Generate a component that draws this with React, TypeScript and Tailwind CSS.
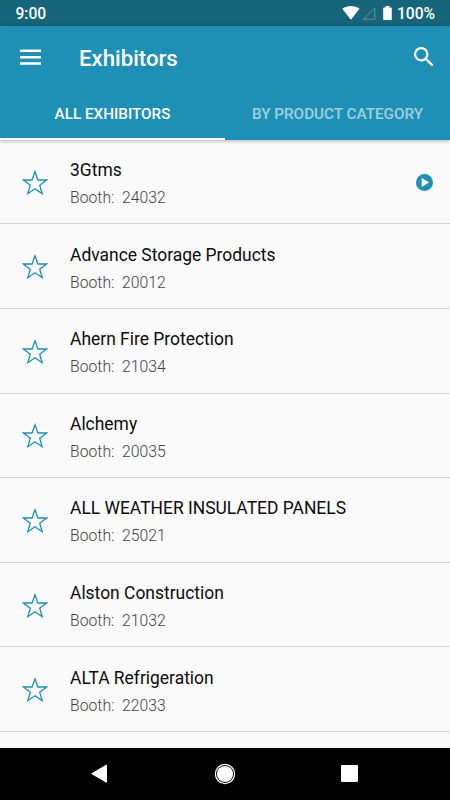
import React from 'react'

interface Exhibitor {
    name: string;
    booth: string;
    hasVideo?: boolean;
}

const exhibitors: Exhibitor[] = [
    { name: '3Gtms', booth: '24032', hasVideo: true },
    { name: 'Advance Storage Products', booth: '20012' },
    { name: 'Ahern Fire Protection', booth: '21034' },
    { name: 'Alchemy', booth: '20035' },
    { name: 'ALL WEATHER INSULATED PANELS', booth: '25021' },
    { name: 'Alston Construction', booth: '21032' },
    { name: 'ALTA Refrigeration', booth: '22033' },
]

function StatusBar() {
    return (
        <div className="flex h-[26px] shrink-0 items-center bg-[#17657b] pl-[15.5px] pr-[15px] text-[15.6px] font-medium leading-none text-white">
            <span className="mt-[4px]">9:00</span>
            <svg className="ml-auto" width="18" height="26" viewBox="0 0 18 26" fill="#fff">
                <path d="M.3 8.7C5.3 5.1 12.5 5.1 17.5 8.7L8.9 19.8z" />
            </svg>
            <svg className="ml-[2px]" width="14" height="26" viewBox="0 0 14 26" fill="none" stroke="#5f96a5">
                <path d="M1.5 19.2L12.8 8V19.2z" />
            </svg>
            <svg className="ml-[7px]" width="9" height="26" viewBox="0 0 9 26" fill="#fff">
                <path d="M2.6 6h3.8v1.5H8q.8 0 .8.8v10.9q0 .8-.8.8H1q-.8 0-.8-.8V8.3q0-.8.8-.8h1.6z" />
            </svg>
            <span className="ml-[5px] mt-[4px]">100%</span>
        </div>
    )
}

function AppBar() {
    return (
        <header className="z-10 flex h-[113.5px] shrink-0 flex-col bg-[#1f90b5] text-white shadow-[0_1px_4px_rgba(0,0,0,0.3)]">
            <div className="flex h-[62px] items-center pl-5 pr-[17px]">
                <button aria-label="Menu">
                    <svg width="21" height="16" viewBox="0 0 21 16" fill="#fff">
                        <path d="M0 .5h21V3H0zM0 7h21v2.4H0zM0 13.3h21v2.5H0z" />
                    </svg>
                </button>
                <h1 className="ml-[38px] mt-[2px] text-[22.2px] font-medium leading-none">Exhibitors</h1>
                <button className="mb-px ml-auto" aria-label="Search">
                    <svg width="19.5" height="19.5" viewBox="3 3 17.49 17.49" fill="#fff">
                        <path d="M15.5 14h-.79l-.28-.27A6.471 6.471 0 0 0 16 9.5 6.5 6.5 0 1 0 9.5 16c1.61 0 3.09-.59 4.23-1.57l.27.28v.79l5 4.99L20.49 19l-4.99-5zm-6 0C7.01 14 5 11.99 5 9.5S7.01 5 9.5 5 14 7.01 14 9.5 11.99 14 9.5 14z" />
                    </svg>
                </button>
            </div>
            <div className="grid flex-1 grid-cols-2 text-[15.25px] font-medium">
                <button className="border-b-2 border-white pt-[3px]">ALL EXHIBITORS</button>
                <button className="border-b-2 border-transparent pt-[3px] text-[#a1d0e0]">BY PRODUCT CATEGORY</button>
            </div>
        </header>
    )
}

function ExhibitorRow({ name, booth, hasVideo }: Exhibitor) {
    return (
        <li className="flex h-[84.6px] shrink-0 items-center border-b border-[#d3d3d3] pl-[22px] pr-[17px] pt-[2px]">
            <svg width="26" height="26" viewBox="0 0 26 26" fill="none" stroke="#1f90b5" strokeWidth="1.3">
                <path d="M13 1.8L15.9 10H24.6L17.7 15.3 20.2 23.7 13 18.7 5.8 23.7 8.3 15.3 1.4 10H10.1z" />
            </svg>
            <div className="ml-[22px] pt-[3px]">
                <div className="text-[17.45px] leading-[27px] text-[#0c0c0c]">{name}</div>
                <div className="whitespace-pre text-[15.75px] font-light leading-[27px] text-[#444]">{'Booth:  ' + booth}</div>
            </div>
            {hasVideo && (
                <svg className="ml-auto" width="17" height="17" viewBox="0 0 17 17">
                    <circle cx="8.5" cy="8.5" r="8.5" fill="#1f90b5" />
                    <path d="M5.6 4L13.2 8.5 5.6 13z" fill="#fff" />
                </svg>
            )}
        </li>
    )
}

function NavigationBar() {
    return (
        <nav className="grid h-[52px] shrink-0 grid-cols-[148px_1fr_148px] items-center bg-black">
            <svg className="ml-[91px]" width="16" height="20" viewBox="0 0 16 20" fill="#fff">
                <path d="M0 9.7L15 .8Q16 .4 16 1.4V18q0 1-1 .6z" />
            </svg>
            <svg className="mx-auto" width="22" height="22" viewBox="0 0 22 22" fill="#fff">
                <circle cx="11" cy="11" r="9.6" fill="none" stroke="#fff" strokeWidth="1.2" />
                <circle cx="11" cy="11" r="8.1" />
            </svg>
            <div className="mb-px ml-[38.5px] h-[17px] w-[17px] rounded-[1px] bg-white"></div>
        </nav>
    )
}

export default function App() {
    return (
        <div className="flex h-[800px] w-[450px] flex-col overflow-hidden bg-[#fafafa] font-[Roboto,sans-serif]">
            <StatusBar />
            <AppBar />
            <ul className="flex min-h-0 flex-1 flex-col overflow-hidden pt-[0.3px]">
                {exhibitors.map((exhibitor) => (
                    <ExhibitorRow key={exhibitor.booth} {...exhibitor} />
                ))}
            </ul>
            <NavigationBar />
        </div>
    )
}
